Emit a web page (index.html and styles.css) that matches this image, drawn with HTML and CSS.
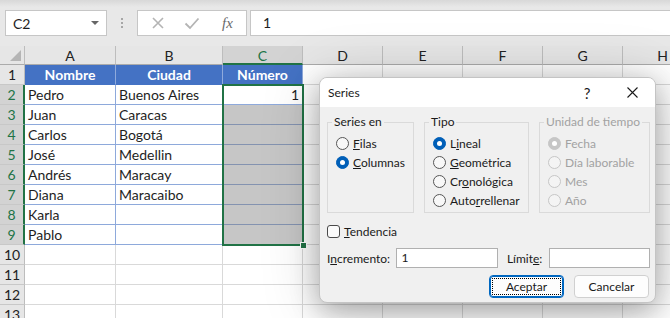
FILE: index.html
```html
<!DOCTYPE html>
<html lang="es">
<head>
    <meta charset="UTF-8">
    <meta name="viewport" content="width=device-width, initial-scale=1.0">
    <title>Series</title>
    <link rel="stylesheet" href="styles.css">
</head>
<body>
    <div class="formula-bar">
        <div class="name-box"><span>C2</span><span class="caret"></span></div>
        <div class="grip"><span></span><span></span><span></span></div>
        <div class="fx-box">
            <svg class="fx-icon" width="14" height="14" viewBox="0 0 14 14"><path d="M2 2 L12 12 M12 2 L2 12" stroke="#b4b4b4" stroke-width="1.6" fill="none"/></svg>
            <svg class="fx-icon" width="16" height="14" viewBox="0 0 16 14"><path d="M1.5 7.5 L6 12 L14.5 2.5" stroke="#b4b4b4" stroke-width="1.8" fill="none"/></svg>
            <i class="fx">fx</i>
        </div>
        <div class="formula-input">1</div>
    </div>

    <div class="sheet">
        <div class="corner"></div>
        <div class="ch">A</div><div class="ch">B</div><div class="ch sel">C</div><div class="ch">D</div><div class="ch">E</div><div class="ch">F</div><div class="ch">G</div><div class="ch">H</div>

        <div class="rh">1</div>
        <div class="c hd">Nombre</div><div class="c hd">Ciudad</div><div class="c hd">Número</div>
        <div class="c"></div><div class="c"></div><div class="c"></div><div class="c"></div><div class="c"></div>

        <div class="rh sel">2</div>
        <div class="c tb">Pedro</div><div class="c tb">Buenos Aires</div><div class="c tb num active">1</div>
        <div class="c"></div><div class="c"></div><div class="c"></div><div class="c"></div><div class="c"></div>

        <div class="rh sel">3</div>
        <div class="c tb">Juan</div><div class="c tb">Caracas</div><div class="c tb shade"></div>
        <div class="c"></div><div class="c"></div><div class="c"></div><div class="c"></div><div class="c"></div>

        <div class="rh sel">4</div>
        <div class="c tb">Carlos</div><div class="c tb">Bogotá</div><div class="c tb shade"></div>
        <div class="c"></div><div class="c"></div><div class="c"></div><div class="c"></div><div class="c"></div>

        <div class="rh sel">5</div>
        <div class="c tb">José</div><div class="c tb">Medellin</div><div class="c tb shade"></div>
        <div class="c"></div><div class="c"></div><div class="c"></div><div class="c"></div><div class="c"></div>

        <div class="rh sel">6</div>
        <div class="c tb">Andrés</div><div class="c tb">Maracay</div><div class="c tb shade"></div>
        <div class="c"></div><div class="c"></div><div class="c"></div><div class="c"></div><div class="c"></div>

        <div class="rh sel">7</div>
        <div class="c tb">Diana</div><div class="c tb">Maracaibo</div><div class="c tb shade"></div>
        <div class="c"></div><div class="c"></div><div class="c"></div><div class="c"></div><div class="c"></div>

        <div class="rh sel">8</div>
        <div class="c tb">Karla</div><div class="c tb"></div><div class="c tb shade"></div>
        <div class="c"></div><div class="c"></div><div class="c"></div><div class="c"></div><div class="c"></div>

        <div class="rh sel">9</div>
        <div class="c tb">Pablo</div><div class="c tb"></div><div class="c tb shade"></div>
        <div class="c"></div><div class="c"></div><div class="c"></div><div class="c"></div><div class="c"></div>

        <div class="rh">10</div>
        <div class="c"></div><div class="c"></div><div class="c"></div><div class="c"></div><div class="c"></div><div class="c"></div><div class="c"></div><div class="c"></div>
        <div class="rh">11</div>
        <div class="c"></div><div class="c"></div><div class="c"></div><div class="c"></div><div class="c"></div><div class="c"></div><div class="c"></div><div class="c"></div>
        <div class="rh">12</div>
        <div class="c"></div><div class="c"></div><div class="c"></div><div class="c"></div><div class="c"></div><div class="c"></div><div class="c"></div><div class="c"></div>
        <div class="rh">13</div>
        <div class="c"></div><div class="c"></div><div class="c"></div><div class="c"></div><div class="c"></div><div class="c"></div><div class="c"></div><div class="c"></div>
    </div>

    <div class="dialog">
        <div class="dialog-title">
            <span class="title-text">Series</span>
            <span class="help">?</span>
            <span class="close"><svg width="11" height="11" viewBox="0 0 11 11"><path d="M0.5 0.5 L10.5 10.5 M10.5 0.5 L0.5 10.5" stroke="#1a1a1a" stroke-width="1.1" fill="none"/></svg></span>
        </div>
        <div class="dialog-body">
            <div class="groups">
                <fieldset class="group g-series">
                    <legend>Series en</legend>
                    <div class="opt"><span class="radio"></span><span><u>F</u>ilas</span></div>
                    <div class="opt"><span class="radio on"></span><span><u>C</u>olumnas</span></div>
                </fieldset>
                <fieldset class="group g-tipo">
                    <legend>Tipo</legend>
                    <div class="opt"><span class="radio on"></span><span>L<u>i</u>neal</span></div>
                    <div class="opt"><span class="radio"></span><span><u>G</u>eométrica</span></div>
                    <div class="opt"><span class="radio"></span><span>Cr<u>o</u>nológica</span></div>
                    <div class="opt"><span class="radio"></span><span>Auto<u>r</u>rellenar</span></div>
                </fieldset>
                <fieldset class="group g-unidad disabled">
                    <legend>Unidad de tiempo</legend>
                    <div class="opt"><span class="radio on"></span><span>Fecha</span></div>
                    <div class="opt"><span class="radio"></span><span>Día laborable</span></div>
                    <div class="opt"><span class="radio"></span><span>Mes</span></div>
                    <div class="opt"><span class="radio"></span><span>Año</span></div>
                </fieldset>
            </div>

            <div class="check-row"><span class="checkbox"></span><span><u>T</u>endencia</span></div>

            <div class="field-row">
                <label class="lbl-inc">I<u>n</u>cremento:</label>
                <div class="text-input inc">1</div>
                <label class="lbl-lim">Límit<u>e</u>:</label>
                <div class="text-input lim"></div>
            </div>

            <div class="button-row">
                <button class="btn primary"><span>Aceptar</span></button>
                <button class="btn">Cancelar</button>
            </div>
        </div>
    </div>
</body>
</html>
```

FILE: styles.css
```css
body {
    margin: 0;
    width: 670px;
    height: 318px;
    overflow: hidden;
    position: relative;
    background: #e6e6e6;
    font-family: Lato, "Liberation Sans", sans-serif;
    color: #1e1e1e;
}

/* formula bar */
.formula-bar {
    height: 46px;
    box-sizing: border-box;
    padding: 10px 0 0 5px;
    display: flex;
    align-items: flex-start;
    background: linear-gradient(#d8d8d8, #e8e8e8 7px, #e8e8e8);
}
.name-box {
    width: 102px;
    height: 26px;
    box-sizing: border-box;
    border: 1px solid #c6c6c6;
    background: #fff;
    display: flex;
    align-items: center;
    justify-content: space-between;
    padding: 0 7px 0 7px;
    font-size: 14px;
}
.caret {
    width: 0;
    height: 0;
    border-left: 4px solid transparent;
    border-right: 4px solid transparent;
    border-top: 4px solid #666;
}
.grip {
    width: 30px;
    height: 26px;
    display: flex;
    flex-direction: column;
    align-items: center;
    justify-content: center;
    gap: 2px;
}
.grip span {
    width: 2px;
    height: 2px;
    background: #a6a6a6;
}
.fx-box {
    width: 110px;
    height: 26px;
    box-sizing: border-box;
    border: 1px solid #c6c6c6;
    background: #fff;
    display: flex;
    align-items: center;
    padding-left: 13px;
    gap: 19px;
}
.fx {
    font-family: "Liberation Serif", serif;
    font-size: 15px;
    color: #6a6a6a;
    margin-left: 3px;
}
.formula-input {
    flex: 1;
    margin-left: 3px;
    margin-right: -4px;
    height: 26px;
    box-sizing: border-box;
    border: 1px solid #c6c6c6;
    background: #fff;
    padding-left: 12px;
    font-size: 14px;
    line-height: 24px;
}

/* sheet grid */
.sheet {
    display: grid;
    grid-template-columns: 25px 91px 107px 80px 80px 80px 80px 80px 80px;
    grid-template-rows: 19px repeat(13, 20px);
    background: #fff;
    font-size: 14px;
}
.sheet > div {
    box-sizing: border-box;
    white-space: nowrap;
    overflow: hidden;
}
.corner {
    background: #e6e6e6;
    border-right: 1px solid #bdbdbd;
    border-bottom: 1px solid #ababab;
    position: relative;
}
.corner::after {
    content: "";
    position: absolute;
    right: 3px;
    bottom: 3px;
    border-left: 11px solid transparent;
    border-bottom: 11px solid #b5b5b5;
}
.ch {
    background: #e6e6e6;
    border-right: 1px solid #bdbdbd;
    border-bottom: 1px solid #ababab;
    text-align: center;
    line-height: 19px;
    color: #222;
}
.ch.sel {
    background: #d3d3d3;
    color: #217346;
    border-bottom: 2px solid #217346;
}
.rh {
    background: #e6e6e6;
    border-right: 1px solid #bdbdbd;
    border-bottom: 1px solid #c8c8c8;
    text-align: center;
    line-height: 19px;
    color: #222;
}
.rh.sel {
    background: #d3d3d3;
    color: #217346;
    border-right: 2px solid #217346;
}
.c {
    border-right: 1px solid #d9d9d9;
    border-bottom: 1px solid #d9d9d9;
    padding: 0 3px;
    line-height: 20px;
}
.c.hd {
    background: #4472c4;
    color: #fff;
    font-weight: bold;
    text-align: center;
    border-right-color: #8faadc;
    border-bottom-color: #4472c4;
}
.c.tb {
    border-right-color: #8ea9db;
    border-bottom-color: #8ea9db;
}
.c.num {
    text-align: right;
}
.c.shade {
    background: #c6c6c6;
    border-bottom-color: #8493b0;
}
/* green range border C2:C9, drawn from the active cell */
.sheet > .c.active {
    position: relative;
    overflow: visible;
}
.c.active::before {
    content: "";
    position: absolute;
    left: -1px;
    top: -1px;
    width: 82px;
    height: 162px;
    box-sizing: border-box;
    border: 2px solid #217346;
    z-index: 1;
}
.c.active::after {
    content: "";
    position: absolute;
    left: 77px;
    top: 157px;
    width: 5px;
    height: 5px;
    background: #217346;
    border: 1px solid #fff;
    z-index: 2;
}

/* dialog */
.dialog {
    position: absolute;
    left: 319px;
    top: 77px;
    width: 337px;
    height: 226px;
    box-sizing: border-box;
    border: 1px solid #c4c4c4;
    border-radius: 8px;
    background: #f0f0f0;
    box-shadow: 0 8px 28px rgba(0, 0, 0, 0.28), 0 4px 60px rgba(0, 0, 0, 0.18);
    overflow: hidden;
    font-size: 12px;
    color: #1a1a1a;
    display: flex;
    flex-direction: column;
    z-index: 5;
}
.dialog-title {
    height: 29px;
    flex: none;
    background: #fff;
    display: flex;
    align-items: center;
    padding-left: 8px;
}
.title-text {
    flex: 1;
}
.help {
    width: 44px;
    text-align: center;
    font-size: 15px;
}
.close {
    width: 46px;
    display: flex;
    justify-content: center;
}
.dialog-body {
    padding: 7px 5px 0 7px;
}
.groups {
    display: flex;
    gap: 10px;
}
.group {
    margin: 0;
    padding: 4px 0 0 8px;
    border: 1px solid #dadada;
    height: 99px;
    box-sizing: border-box;
}
.g-series { width: 87px; }
.g-tipo { width: 105px; }
.g-unidad { width: 111px; }
.group legend {
    padding: 0 2px;
    margin-left: -4px;
    line-height: 16px;
}
.disabled,
.disabled legend {
    color: #a2a2a2;
}
.opt {
    display: flex;
    align-items: center;
    gap: 4px;
    height: 19px;
}
.radio {
    width: 13px;
    height: 13px;
    box-sizing: border-box;
    border: 1px solid #565656;
    border-radius: 50%;
    background: #f8f8f8;
    display: grid;
    place-items: center;
}
.radio.on {
    background: #005fb8;
    border-color: #005fb8;
}
.radio.on::after {
    content: "";
    width: 5px;
    height: 5px;
    border-radius: 50%;
    background: #fff;
}
.disabled .radio {
    border-color: #c6c6c6;
    background: #f4f4f4;
}
.disabled .radio.on {
    background: #c6c6c6;
}
.check-row {
    display: flex;
    align-items: center;
    gap: 4px;
    height: 16px;
    margin-top: 10px;
}
.checkbox {
    width: 13px;
    height: 13px;
    box-sizing: border-box;
    border: 1px solid #4a4a4a;
    border-radius: 3px;
    background: #fbfbfb;
}
.field-row {
    display: flex;
    align-items: center;
    margin-top: 9px;
    height: 20px;
}
.lbl-inc { width: 69px; }
.lbl-lim { width: 42px; margin-left: 9px; }
.text-input {
    height: 20px;
    box-sizing: border-box;
    border: 1px solid #b0b0b0;
    background: #fff;
    padding-left: 5px;
    line-height: 18px;
}
.text-input.inc { width: 103px; }
.text-input.lim { width: 102px; }
.button-row {
    display: flex;
    justify-content: flex-end;
    gap: 10px;
    margin-top: 7px;
    padding-right: 1px;
}
.btn {
    width: 75px;
    height: 23px;
    box-sizing: border-box;
    border: 1px solid #d0d0d0;
    border-radius: 4px;
    background: #fdfdfd;
    font-family: inherit;
    font-size: 12px;
    color: #1a1a1a;
    padding: 0;
}
.btn.primary {
    border: 1px solid #0067c0;
    box-shadow: inset 0 0 0 1px #0067c0;
    outline: 1px dotted #000;
    outline-offset: -4px;
}
```
